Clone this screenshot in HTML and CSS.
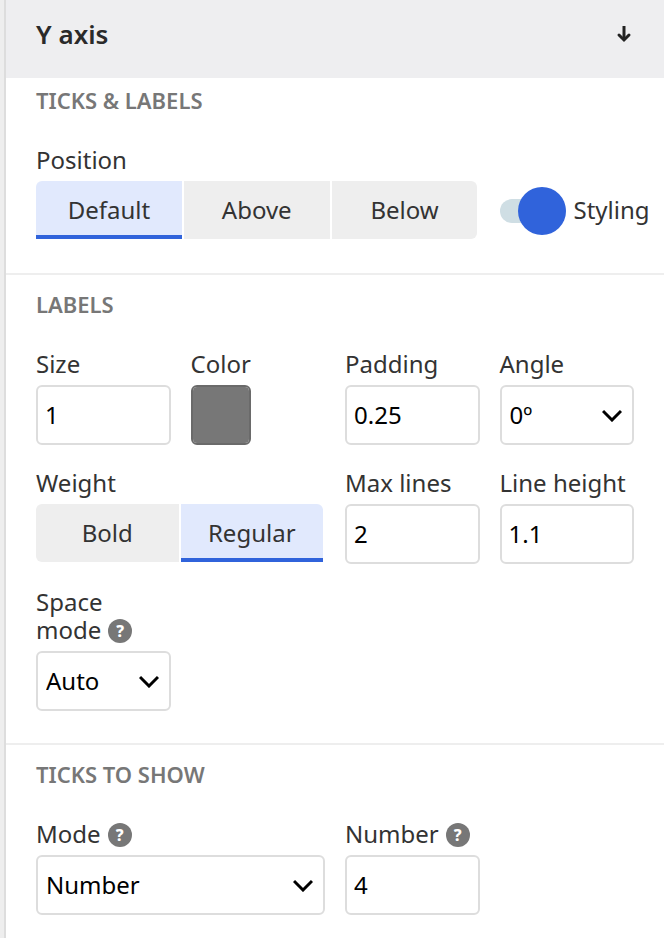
FILE: index.html
```html
<!DOCTYPE html>
<html lang="en">
<head>
    <meta charset="UTF-8">
    <meta name="viewport" content="width=device-width, initial-scale=1.0">
    <title>Y axis settings</title>
    <link rel="stylesheet" href="styles.css">
</head>
<body>
    <form class="panel">
        <header class="panel-header">
            <h1>Y axis</h1>
            <button type="button" class="collapse" aria-label="Collapse section">
                <svg width="16" height="18" viewBox="0 0 16 18" fill="none" stroke="currentColor" stroke-width="3">
                    <path d="M8 1V15"/>
                    <path d="M3 10L8 15L13 10" stroke-linecap="round"/>
                </svg>
            </button>
        </header>

        <!-- Ticks & labels -->
        <section class="section section-first">
            <h2>TICKS &amp; LABELS</h2>
            <div class="grid">
                <div class="field span-3">
                    <span class="label" id="positionLabel">Position</span>
                    <div class="segmented" role="group" aria-labelledby="positionLabel">
                        <button type="button" class="selected" aria-pressed="true">Default</button>
                        <button type="button" aria-pressed="false">Above</button>
                        <button type="button" aria-pressed="false">Below</button>
                    </div>
                </div>
                <div class="toggle">
                    <input type="checkbox" id="styling" checked>
                    <label for="styling">Styling</label>
                </div>
            </div>
        </section>

        <!-- Labels -->
        <section class="section">
            <h2>LABELS</h2>
            <div class="grid">
                <div class="field">
                    <label class="label" for="size">Size</label>
                    <input type="text" class="control" id="size" value="1">
                </div>
                <div class="field">
                    <label class="label" for="color">Color</label>
                    <input type="color" class="swatch" id="color" value="#777777">
                </div>
                <div class="field">
                    <label class="label" for="padding">Padding</label>
                    <input type="text" class="control" id="padding" value="0.25">
                </div>
                <div class="field">
                    <label class="label" for="angle">Angle</label>
                    <div class="select">
                        <select class="control" id="angle">
                            <option>0º</option>
                            <option>45º</option>
                            <option>90º</option>
                        </select>
                        <svg class="chevron" width="20" height="14" viewBox="0 0 20 14"><path d="M1 3L10 12L19 3"/></svg>
                    </div>
                </div>
                <div class="field span-2">
                    <span class="label" id="weightLabel">Weight</span>
                    <div class="segmented" role="group" aria-labelledby="weightLabel">
                        <button type="button" aria-pressed="false">Bold</button>
                        <button type="button" class="selected" aria-pressed="true">Regular</button>
                    </div>
                </div>
                <div class="field">
                    <label class="label" for="maxLines">Max lines</label>
                    <input type="text" class="control" id="maxLines" value="2">
                </div>
                <div class="field">
                    <label class="label" for="lineHeight">Line height</label>
                    <input type="text" class="control" id="lineHeight" value="1.1">
                </div>
                <div class="field">
                    <label class="label" for="spaceMode">Space <span class="nowrap">mode<span class="help">?</span></span></label>
                    <div class="select">
                        <select class="control" id="spaceMode">
                            <option>Auto</option>
                            <option>Fixed</option>
                        </select>
                        <svg class="chevron" width="20" height="14" viewBox="0 0 20 14"><path d="M1 3L10 12L19 3"/></svg>
                    </div>
                </div>
            </div>
        </section>

        <!-- Ticks to show -->
        <section class="section">
            <h2>TICKS TO SHOW</h2>
            <div class="grid">
                <div class="field span-2">
                    <label class="label" for="mode">Mode<span class="help">?</span></label>
                    <div class="select">
                        <select class="control" id="mode">
                            <option>Number</option>
                            <option>Custom</option>
                        </select>
                        <svg class="chevron" width="20" height="14" viewBox="0 0 20 14"><path d="M1 3L10 12L19 3"/></svg>
                    </div>
                </div>
                <div class="field">
                    <label class="label" for="number">Number<span class="help">?</span></label>
                    <input type="text" class="control" id="number" value="4">
                </div>
            </div>
        </section>
    </form>
</body>
</html>
```
FILE: styles.css
```css
* {
    box-sizing: border-box;
}
body {
    margin: 0;
    padding-left: 4px;
    min-height: 100vh;
    display: flex;
    background-color: #eeeeee;
    color: #333333;
    font-family: "Noto Sans", sans-serif;
    font-size: 24px;
    line-height: 28px;
}
button,
input,
select {
    font: inherit;
    color: inherit;
}
.panel {
    flex: 1;
    min-width: 0;
    border-left: 2px solid #dddddd;
    background-color: #ffffff;
}

/* Header */
.panel-header {
    display: flex;
    justify-content: space-between;
    align-items: center;
    height: 78px;
    padding: 0 30px 10px;
    background-color: #eeeef0;
}
h1 {
    margin: 0;
    font-size: 26px;
    font-weight: 600;
    color: #2a2a2a;
}
.collapse {
    display: flex;
    padding: 2px;
    border: none;
    background: none;
    color: #222222;
    cursor: pointer;
}

/* Sections */
.section {
    padding: 14px 30px 32px;
}
.section + .section {
    border-top: 2px solid #eeeeee;
}
.section-first {
    padding-top: 7px;
}
h2 {
    margin: 0 0 31px;
    font-size: 22px;
    line-height: 30px;
    font-weight: 600;
    color: #777777;
}
.grid {
    display: grid;
    grid-template-columns: repeat(4, minmax(0, 1fr));
    gap: 24px 20px;
}
.span-2 {
    grid-column: span 2;
}
.span-3 {
    grid-column: span 3;
}
.label {
    display: block;
    margin-bottom: 7px;
}
.nowrap {
    white-space: nowrap;
}

/* Inputs and selects */
.control {
    display: block;
    width: 100%;
    height: 60px;
    padding: 0 7px 2px;
    border: 2px solid #dddddd;
    border-radius: 6px;
    background-color: #ffffff;
    color: #000000;
}
.select {
    display: grid;
    align-items: center;
}
.select > * {
    grid-area: 1 / 1;
}
select.control {
    appearance: none;
    padding: 0 8px;
}
.chevron {
    justify-self: end;
    margin-right: 12px;
    fill: none;
    stroke: #000000;
    stroke-width: 3;
    pointer-events: none;
}
.swatch {
    display: block;
    width: 60px;
    height: 60px;
    padding: 0;
    border: 2px solid #6a6a6a;
    border-radius: 6px;
    background-color: #777777;
}
.swatch::-webkit-color-swatch-wrapper {
    padding: 0;
}
.swatch::-webkit-color-swatch {
    border: none;
}

/* Button groups */
.segmented {
    display: flex;
    gap: 2px;
    height: 60px;
    padding: 0 2px 2px 0;
}
.segmented button {
    flex: 1 1 0;
    padding: 0;
    border: none;
    background-color: #eeeeee;
    cursor: pointer;
}
.segmented button:first-child {
    border-radius: 6px 0 0 6px;
}
.segmented button:last-child {
    border-radius: 0 6px 6px 0;
}
.segmented .selected {
    padding-top: 4px;
    border-bottom: 4px solid #3063db;
    background-color: #e1e9fd;
}
.segmented .selected:first-child {
    border-radius: 6px 0 0 0;
}
.segmented .selected:last-child {
    border-radius: 0 6px 0 0;
}

/* Switch */
.toggle {
    display: flex;
    align-items: center;
    align-self: end;
    gap: 8px;
    height: 60px;
    white-space: nowrap;
}
.toggle label {
    padding-bottom: 3px;
}
.toggle input {
    appearance: none;
    display: flex;
    flex: none;
    justify-content: flex-end;
    align-items: center;
    width: 66px;
    height: 24px;
    margin: 0;
    border-radius: 12px;
    background-color: #cfdee4;
    cursor: pointer;
}
.toggle input::before {
    content: "";
    flex: none;
    width: 48px;
    height: 48px;
    border-radius: 50%;
    background-color: #3063db;
}

.help {
    display: inline-block;
    width: 24px;
    height: 24px;
    margin-left: 7px;
    border-radius: 50%;
    background-color: #777777;
    color: #ffffff;
    font-size: 16px;
    line-height: 24px;
    font-weight: 800;
    text-align: center;
    vertical-align: 2px;
}
```
